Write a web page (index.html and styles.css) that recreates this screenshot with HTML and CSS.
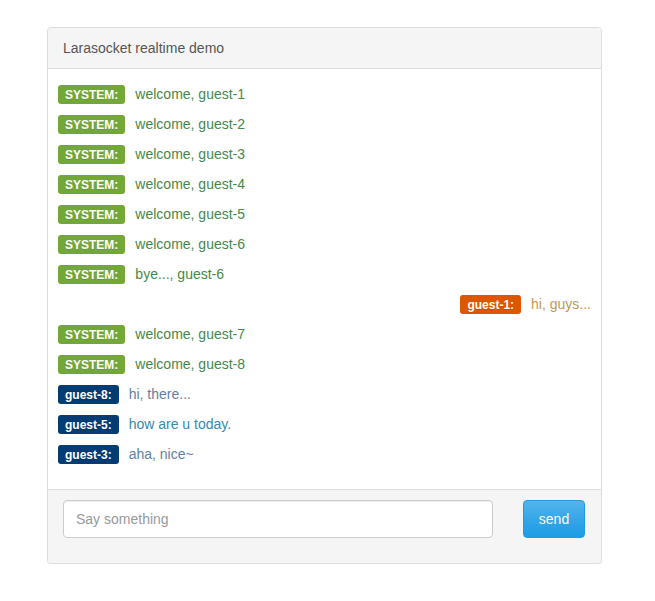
FILE: index.html
```html
<!DOCTYPE html>
<html>
<head>
<meta charset="utf-8">
<title>Larasocket realtime demo</title>
<link rel="stylesheet" href="styles.css">
</head>
<body>
<div class="panel">
  <div class="panel-heading">Larasocket realtime demo</div>
  <div class="panel-body">
    <div class="msg"><span class="label label-success">SYSTEM:</span><span class="text text-success">welcome, guest-1</span></div>
    <div class="msg"><span class="label label-success">SYSTEM:</span><span class="text text-success">welcome, guest-2</span></div>
    <div class="msg"><span class="label label-success">SYSTEM:</span><span class="text text-success">welcome, guest-3</span></div>
    <div class="msg"><span class="label label-success">SYSTEM:</span><span class="text text-success">welcome, guest-4</span></div>
    <div class="msg"><span class="label label-success">SYSTEM:</span><span class="text text-success">welcome, guest-5</span></div>
    <div class="msg"><span class="label label-success">SYSTEM:</span><span class="text text-success">welcome, guest-6</span></div>
    <div class="msg"><span class="label label-success">SYSTEM:</span><span class="text text-success">bye..., guest-6</span></div>
    <div class="msg msg-self"><span class="label label-warning">guest-1:</span><span class="text text-warning">hi, guys...</span></div>
    <div class="msg"><span class="label label-success">SYSTEM:</span><span class="text text-success">welcome, guest-7</span></div>
    <div class="msg"><span class="label label-success">SYSTEM:</span><span class="text text-success">welcome, guest-8</span></div>
    <div class="msg"><span class="label label-info">guest-8:</span><span class="text text-muted-blue">hi, there...</span></div>
    <div class="msg"><span class="label label-info">guest-5:</span><span class="text text-info">how are u today.</span></div>
    <div class="msg"><span class="label label-info">guest-3:</span><span class="text text-muted-blue">aha, nice~</span></div>
  </div>
  <div class="panel-footer">
    <form class="send-form">
      <input class="form-control" type="text" placeholder="Say something">
      <button class="btn btn-primary" type="button">send</button>
    </form>
  </div>
</div>
</body>
</html>
```
FILE: styles.css
```css
* { box-sizing: border-box; }
html, body { margin: 0; padding: 0; background: #fff; }
body {
  font-family: "Liberation Sans", Arial, Helvetica, sans-serif;
  font-size: 14px;
  line-height: 20px;
  color: #555555;
  padding: 27px 0 0 47px;
}
.panel {
  width: 555px;
  border: 1px solid #dddddd;
  border-radius: 4px;
  background: #fff;
  box-shadow: 0 1px 1px rgba(0,0,0,0.05);
}
.panel-heading {
  background: #f5f5f5;
  border-bottom: 1px solid #dddddd;
  padding: 10px 15px;
  border-radius: 3px 3px 0 0;
  color: #555555;
}
.panel-body {
  padding: 15px 10px 15px 10px;
}
.msg {
  margin-bottom: 10px;
  white-space: nowrap;
}
.msg-self { text-align: right; }
.label {
  display: inline-block;
  font-size: 12px;
  font-weight: bold;
  line-height: 12px;
  color: #fff;
  padding: 4px 7px 3px;
  border-radius: 3px;
  vertical-align: baseline;
  text-shadow: 0 1px 0 rgba(0,0,0,0.1);
}
.label-success { background: #73a839; }
.label-warning { background: #dd5600; }
.label-info { background: #033c73; }
.text { margin-left: 10px; }
.text-success { color: #468847; }
.text-warning { color: #c09853; }
.text-info { color: #3a87ad; }
.text-muted-blue { color: #5f7fa3; }
.panel-footer {
  background: #f5f5f5;
  border-top: 1px solid #dddddd;
  padding: 10px 15px 25px;
  border-radius: 0 0 3px 3px;
}
.send-form {
  display: flex;
  justify-content: space-between;
  margin: 0;
}
.form-control {
  width: 430px;
  height: 38px;
  padding: 8px 12px;
  font-family: inherit;
  font-size: 14px;
  color: #555;
  border: 1px solid #cccccc;
  border-radius: 4px;
  background: #fff;
  box-shadow: inset 0 1px 1px rgba(0,0,0,0.075);
  outline: none;
}
.form-control::placeholder { color: #999999; }
.btn {
  width: 62px;
  height: 38px;
  margin-right: 1px;
  font-family: inherit;
  font-size: 14px;
  color: #fff;
  border: 1px solid #1f9be0;
  border-radius: 4px;
  background: linear-gradient(to bottom, #54b4eb 0%, #2fa4e7 60%, #1d9ce5 100%);
  padding: 0;
}
```
